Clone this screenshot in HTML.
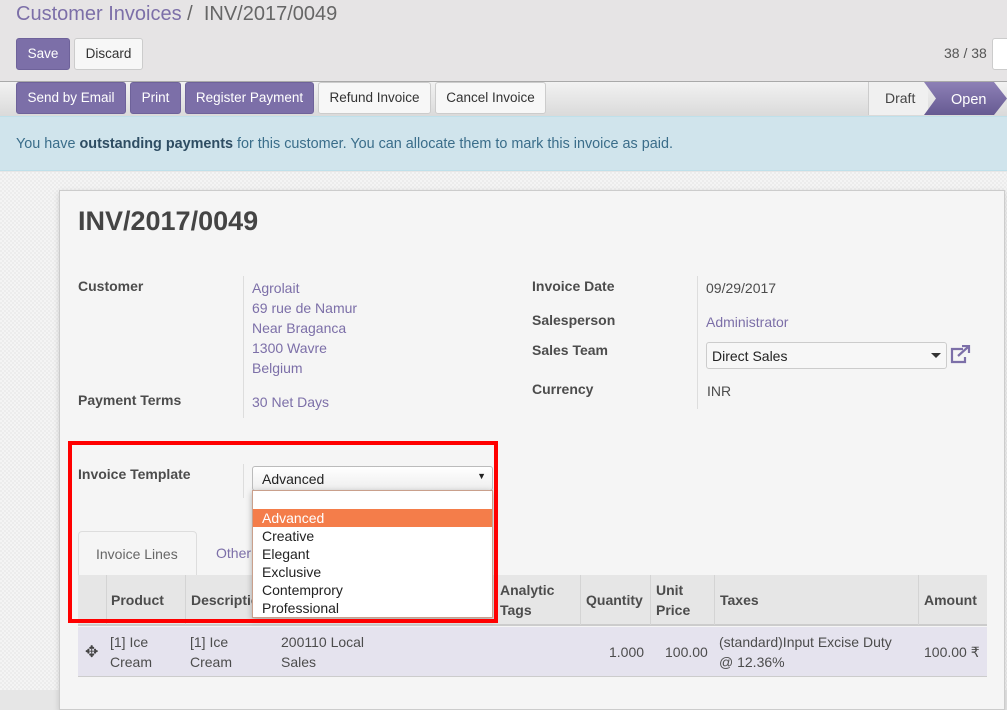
<!DOCTYPE html>
<html><head><style>
*{box-sizing:border-box;margin:0;padding:0}
body{width:1007px;height:690px;overflow:hidden;font-family:"Liberation Sans",sans-serif;font-size:14px;color:#4c4c4c;background:#e6e6e6;position:relative}
.a{position:absolute}
.btn{position:absolute;height:32px;line-height:30px;font-size:13.5px;padding:0;white-space:nowrap;border-radius:3px;text-align:center}
.p{background:#7c6fa8;color:#fff;border:1px solid #6e629a}
.w{background:#f7f7f7;color:#333;border:1px solid #ccc}
.lbl{position:absolute;font-weight:bold;color:#4c4c4c}
.lnk{color:#7c6fa8}
.sep{position:absolute;width:1px;background:#ddd}
</style></head><body>
<div class="a" style="left:0;top:0;width:1007px;height:82px;background:#e6e4e5"></div>
<div class="a" style="left:16px;top:3px;font-size:20px;color:#7c6fa8">Customer Invoices <span style="color:#666">/ &nbsp;INV/2017/0049</span></div>
<div class="btn p" style="left:16px;top:38px;width:54px">Save</div>
<div class="btn w" style="left:74px;top:38px;width:69px">Discard</div>
<div class="a" style="left:944px;top:45px;color:#555">38 / 38</div>
<div class="a" style="left:992px;top:38px;width:20px;height:32px;background:#fff;border:1px solid #ccc;border-radius:3px"></div>
<div class="a" style="left:0;top:81px;width:1007px;height:35px;background:linear-gradient(#f2f2f2,#dadada);border-top:1px solid #a9a9a9"></div>
<div class="btn p" style="left:16px;top:82px;width:110px">Send by Email</div>
<div class="btn p" style="left:130px;top:82px;width:51px">Print</div>
<div class="btn p" style="left:185px;top:82px;width:129px">Register Payment</div>
<div class="btn w" style="left:318px;top:82px;width:113px">Refund Invoice</div>
<div class="btn w" style="left:435px;top:82px;width:111px">Cancel Invoice</div>
<div class="a" style="left:868px;top:82px;width:60px;height:33px;background:#f0f0f0;border-left:1px solid #ccc;line-height:32px;padding-left:16px;font-size:14px;color:#444">Draft</div>
<svg class="a" style="left:922px;top:82px" width="85" height="33"><defs><linearGradient id="g" x1="0" y1="0" x2="0" y2="1"><stop offset="0" stop-color="#8d80b6"/><stop offset="1" stop-color="#665a92"/></linearGradient></defs><polygon points="2,0 72,0 85,16.5 72,33 2,33 14,16.5" fill="url(#g)"/><text x="29" y="22" fill="#fff" font-family="Liberation Sans" font-size="14.5">Open</text></svg>
<div class="a" style="left:0;top:116px;width:1007px;height:55px;background:#d0e4ec;border-top:1px solid #bfe0ea;border-bottom:1px solid #bfe0ea;color:#3a6d8a;padding:19px 16px;font-size:14.4px">You have <b style="color:#2e4d63">outstanding payments</b> for this customer. You can allocate them to mark this invoice as paid.</div>
<div class="a" style="left:0;top:172px;width:1007px;height:518px;background:repeating-conic-gradient(#ececec 0 25%,#f4f4f4 0 50%) 0 0/4px 4px"></div>
<div class="a" style="left:59px;top:190px;width:946px;height:520px;background:#f5f5f5;border:1px solid #ccc;box-shadow:0 2px 6px rgba(0,0,0,.15)"></div>
<div class="a" style="left:78px;top:206px;font-size:27px;font-weight:bold;color:#444">INV/2017/0049</div>
<div class="lbl" style="left:78px;top:278px">Customer</div>
<div class="sep" style="left:243px;top:276px;height:142px"></div>
<div class="a lnk" style="left:252px;top:278px;line-height:20px">Agrolait<br>69 rue de Namur<br>Near Braganca<br>1300 Wavre<br>Belgium</div>
<div class="lbl" style="left:78px;top:392px">Payment Terms</div>
<div class="a lnk" style="left:252px;top:394px">30 Net Days</div>
<div class="lbl" style="left:532px;top:278px">Invoice Date</div>
<div class="sep" style="left:697px;top:276px;height:133px"></div>
<div class="a" style="left:706px;top:280px">09/29/2017</div>
<div class="lbl" style="left:532px;top:312px">Salesperson</div>
<div class="a lnk" style="left:706px;top:314px">Administrator</div>
<div class="lbl" style="left:532px;top:342px">Sales Team</div>
<div class="a" style="left:706px;top:342px;width:241px;height:27px;border:1px solid #ccc;border-radius:3px;background:#f7f7f7;padding:5px;color:#222">Direct Sales<svg style="position:absolute;right:5px;top:10px" width="10" height="6"><polygon points="0,0 10,0 5,5" fill="#333"/></svg></div>
<svg class="a" style="left:949px;top:345px" width="22" height="20" viewBox="0 0 22 20"><path d="M14 4H3v13h13v-5" fill="none" stroke="#7c6fa8" stroke-width="2.2"/><path d="M9 11L19 2M13 1h7v7" fill="none" stroke="#7c6fa8" stroke-width="2.2"/></svg>
<div class="lbl" style="left:532px;top:381px">Currency</div>
<div class="a" style="left:707px;top:383px">INR</div>
<div class="lbl" style="left:78px;top:466px">Invoice Template</div>
<div class="sep" style="left:243px;top:464px;height:34px"></div>
<div class="a" style="left:252px;top:466px;width:241px;height:25px;border:1px solid #bbb;border-radius:3px;background:linear-gradient(#fff,#eee);padding:4px 9px;color:#222">Advanced<span style="position:absolute;right:6px;top:4px;font-size:9px">▼</span></div>
<div class="a" style="left:78px;top:531px;width:119px;height:45px;border:1px solid #ddd;border-bottom:none;border-radius:4px 4px 0 0;background:#f5f5f5;padding:14px 17px;color:#666">Invoice Lines</div>
<div class="a lnk" style="left:216px;top:545px">Other</div>
<div class="a" style="left:78px;top:575px;width:909px;height:51px;background:#e6e6e6;border-bottom:2px solid #ccc"></div>
<div class="sep" style="left:106px;top:575px;height:50px;background:#d4d4d4"></div>
<div class="sep" style="left:185px;top:575px;height:50px;background:#d4d4d4"></div>
<div class="sep" style="left:580px;top:575px;height:50px;background:#d4d4d4"></div>
<div class="sep" style="left:650px;top:575px;height:50px;background:#d4d4d4"></div>
<div class="sep" style="left:714px;top:575px;height:50px;background:#d4d4d4"></div>
<div class="sep" style="left:918px;top:575px;height:50px;background:#d4d4d4"></div>
<div class="lbl" style="left:111px;top:592px">Product</div>
<div class="lbl" style="left:191px;top:592px">Description</div>
<div class="lbl" style="left:500px;top:580px;line-height:20px">Analytic<br>Tags</div>
<div class="lbl" style="left:586px;top:592px">Quantity</div>
<div class="lbl" style="left:656px;top:580px;line-height:20px">Unit<br>Price</div>
<div class="lbl" style="left:720px;top:592px">Taxes</div>
<div class="lbl" style="left:924px;top:592px">Amount</div>
<div class="a" style="left:78px;top:627px;width:909px;height:50px;background:#e5e3ee;border-bottom:1px solid #ccc"></div>
<div class="a" style="left:85px;top:642px;font-size:16px;color:#444">✥</div>
<div class="a" style="left:110px;top:632px;line-height:20px">[1] Ice<br>Cream</div>
<div class="a" style="left:190px;top:632px;line-height:20px">[1] Ice<br>Cream</div>
<div class="a" style="left:281px;top:632px;line-height:20px">200110 Local<br>Sales</div>
<div class="a" style="left:609px;top:644px">1.000</div>
<div class="a" style="left:665px;top:644px">100.00</div>
<div class="a" style="left:719px;top:632px;line-height:20px">(standard)Input Excise Duty<br>@ 12.36%</div>
<div class="a" style="left:924px;top:644px">100.00 ₹</div>
<div class="a" style="left:252px;top:490px;width:241px;height:128px;background:#fff;border:1px solid #c9a08c;box-shadow:0 2px 6px rgba(0,0,0,.3);color:#222;line-height:18px;font-size:14px">
<div style="height:18px"></div>
<div style="background:#f47d4a;color:#fff;padding-left:9px">Advanced</div>
<div style="padding-left:9px">Creative</div>
<div style="padding-left:9px">Elegant</div>
<div style="padding-left:9px">Exclusive</div>
<div style="padding-left:9px">Contemprory</div>
<div style="padding-left:9px">Professional</div>
</div>
<div class="a" style="left:68px;top:441px;width:430px;height:182px;border:4px solid #f00"></div>
</body></html>
